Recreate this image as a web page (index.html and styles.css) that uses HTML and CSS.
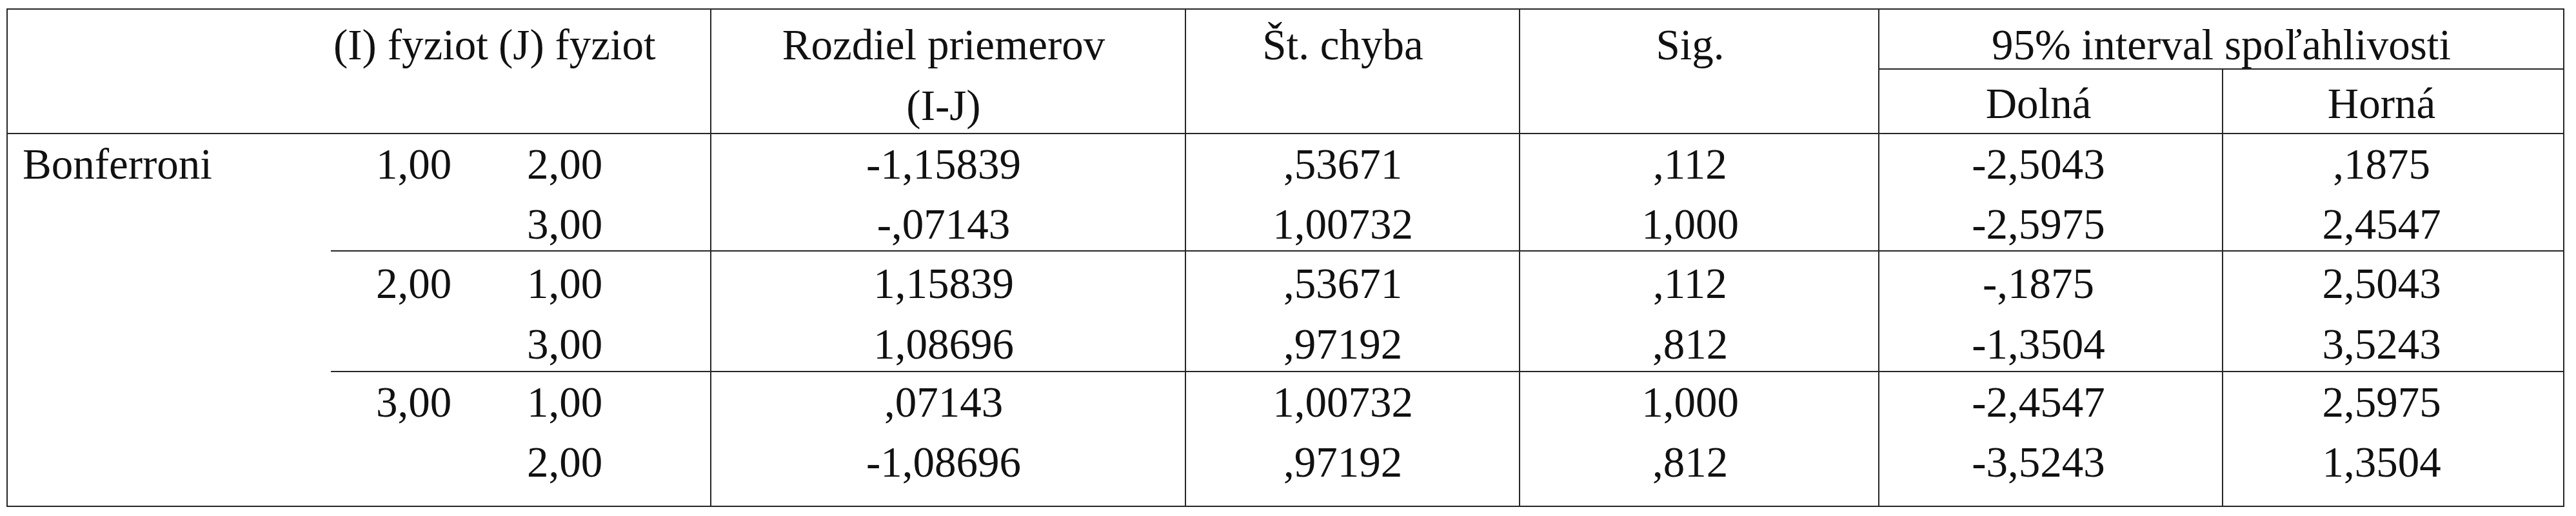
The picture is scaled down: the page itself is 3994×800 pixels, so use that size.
FILE: index.html
```html
<!DOCTYPE html>
<html lang="sk">
<head>
<meta charset="utf-8">
<title>Bonferroni – viacnásobné porovnania</title>
<link rel="stylesheet" href="styles.css">
</head>
<body>
<table class="posthoc">
  <colgroup>
    <col class="w-test"><col class="w-i"><col class="w-j"><col class="w-diff"><col class="w-se"><col class="w-sig"><col class="w-lo"><col class="w-hi">
  </colgroup>
  <thead>
    <tr class="h1">
      <th rowspan="2" class="h-blank"></th>
      <th rowspan="2" class="h-i">(I) fyziot</th>
      <th rowspan="2" class="h-j">(J) fyziot</th>
      <th rowspan="2" class="h-diff c-diff"><span class="line">Rozdiel priemerov</span><span class="line line-2">(I-J)</span></th>
      <th rowspan="2" class="h-se c-se">Št. chyba</th>
      <th rowspan="2" class="h-sig c-sig">Sig.</th>
      <th colspan="2" class="h-ci">95% interval spoľahlivosti</th>
    </tr>
    <tr class="h2">
      <th class="h-sub c-lo">Dolná</th>
      <th class="h-sub c-hi">Horná</th>
    </tr>
  </thead>
  <tbody>
    <tr class="g1a">
      <td rowspan="6" class="test">Bonferroni</td>
      <td class="c-i">1,00</td><td class="c-j">2,00</td><td class="c-diff">-1,15839</td><td class="c-se">,53671</td><td class="c-sig">,112</td><td class="c-lo">-2,5043</td><td class="c-hi">,1875</td>
    </tr>
    <tr class="g1b">
      <td class="c-i"></td><td class="c-j">3,00</td><td class="c-diff">-,07143</td><td class="c-se">1,00732</td><td class="c-sig">1,000</td><td class="c-lo">-2,5975</td><td class="c-hi">2,4547</td>
    </tr>
    <tr class="g2a">
      <td class="c-i">2,00</td><td class="c-j">1,00</td><td class="c-diff">1,15839</td><td class="c-se">,53671</td><td class="c-sig">,112</td><td class="c-lo">-,1875</td><td class="c-hi">2,5043</td>
    </tr>
    <tr class="g2b">
      <td class="c-i"></td><td class="c-j">3,00</td><td class="c-diff">1,08696</td><td class="c-se">,97192</td><td class="c-sig">,812</td><td class="c-lo">-1,3504</td><td class="c-hi">3,5243</td>
    </tr>
    <tr class="g3a">
      <td class="c-i">3,00</td><td class="c-j">1,00</td><td class="c-diff">,07143</td><td class="c-se">1,00732</td><td class="c-sig">1,000</td><td class="c-lo">-2,4547</td><td class="c-hi">2,5975</td>
    </tr>
    <tr class="g3b">
      <td class="c-i"></td><td class="c-j">2,00</td><td class="c-diff">-1,08696</td><td class="c-se">,97192</td><td class="c-sig">,812</td><td class="c-lo">-3,5243</td><td class="c-hi">1,3504</td>
    </tr>
  </tbody>
</table>
</body>
</html>
```
FILE: styles.css
```css
html, body {
  margin: 0;
  padding: 0;
  background: #ffffff;
}

body {
  font-family: "Liberation Serif", "Times New Roman", serif;
  font-size: 67px;
  color: #111111;
}

.posthoc {
  margin: 13px 0 0 10px;
  width: 3966px;
  table-layout: fixed;
  border-collapse: collapse;
  border: 2px solid #262626;
}

.w-test { width: 502px; }
.w-i    { width: 257px; }
.w-j    { width: 332px; }
.w-diff { width: 736px; }
.w-se   { width: 518px; }
.w-sig  { width: 557px; }
.w-lo   { width: 533px; }
.w-hi   { width: 529px; }

.posthoc th,
.posthoc td {
  font-weight: normal;
  line-height: 74px;
  white-space: nowrap;
  text-align: center;
  vertical-align: top;
  padding: 0;
}

/* header */
.posthoc thead th {
  border-bottom: 2px solid #262626;
}

.posthoc .h1 th {
  padding-top: 17px;
}

.posthoc .h-ci {
  border-left: 2px solid #262626;
}

.posthoc .h2 .h-sub {
  padding-top: 15px;
  padding-bottom: 9px;
}

.posthoc .h-i {
  text-align: left;
  padding-left: 4px;
}

.posthoc .h-j {
  text-align: left;
  padding-left: 3px;
}

.line {
  display: block;
}

.line-2 {
  margin-top: 20px;
}

/* vertical rules */
.posthoc .c-diff,
.posthoc .c-se,
.posthoc .c-sig,
.posthoc .c-lo,
.posthoc .c-hi {
  border-left: 2px solid #262626;
}

/* column alignment */
.posthoc .test {
  text-align: left;
  padding-left: 23px;
  padding-top: 9px;
}

.posthoc .c-j    { padding-right: 120px; }
.posthoc .h-j    { padding-right: 0; }
.posthoc .c-diff { padding-right: 14px; }
.posthoc .c-se   { padding-right: 30px; }
.posthoc .c-sig  { padding-right: 28px; }
.posthoc .c-lo   { padding-right: 38px; }
.posthoc .c-hi   { padding-right: 36px; }

/* data rows */
.posthoc .g1a td { padding-top: 9px;  padding-bottom: 10px; }
.posthoc .g1b td { padding-top: 9px;  padding-bottom: 4px; }
.posthoc .g2a td { padding-top: 12px; padding-bottom: 10px; }
.posthoc .g2b td { padding-top: 10px; padding-bottom: 5px; }
.posthoc .g3a td { padding-top: 9px;  padding-bottom: 10px; }
.posthoc .g3b td { padding-top: 9px;  padding-bottom: 31px; }

.posthoc .g2a td,
.posthoc .g3a td {
  border-top: 2px solid #262626;
}
```
